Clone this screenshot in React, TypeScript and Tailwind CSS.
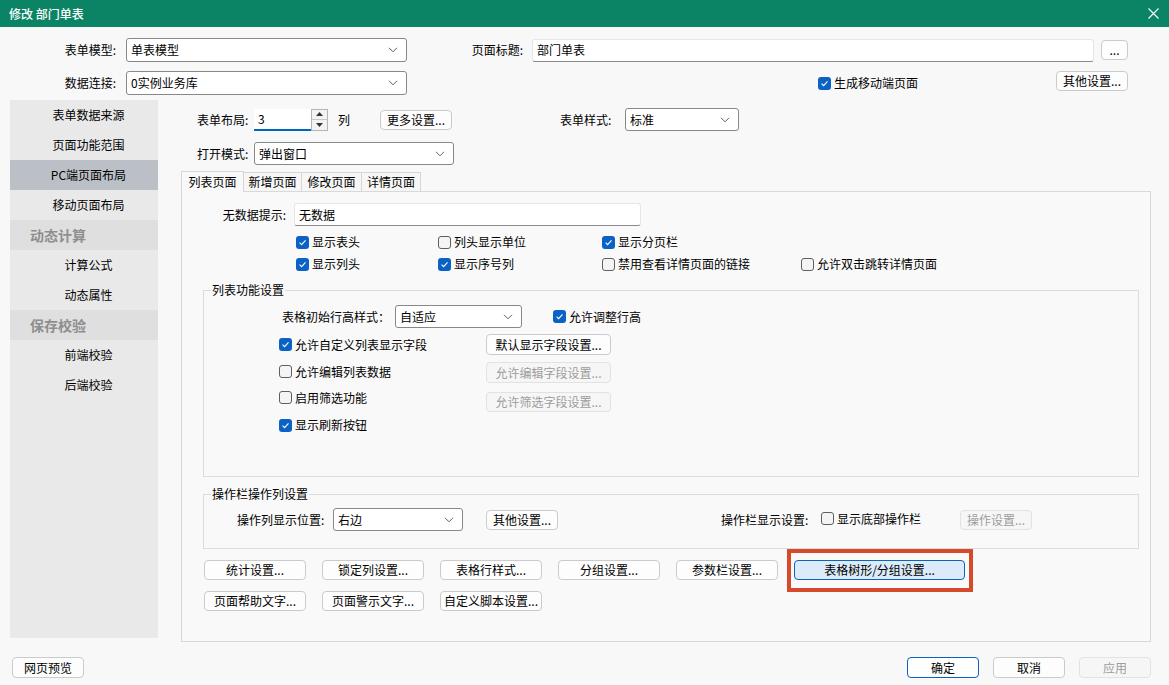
import React from 'react';

const Chevron: React.FC = () => (
  <svg width="10" height="6" viewBox="0 0 10 6" className="shrink-0">
    <path d="M1 0.8 L5 4.8 L9 0.8" fill="none" stroke="#5e5e5e" strokeWidth="1" />
  </svg>
);

const Check: React.FC<{ checked?: boolean; label: string }> = ({ checked, label }) => (
  <span className="inline-flex items-center gap-[3px] whitespace-nowrap">
    {checked ? (
      <span className="w-[13px] h-[13px] rounded-[3px] bg-[#0b62c4] flex items-center justify-center shrink-0">
        <svg width="9" height="9" viewBox="0 0 9 9">
          <path d="M1.6 4.7 L3.6 6.6 L7.5 2.3" fill="none" stroke="#ffffff" strokeWidth="1.1" />
        </svg>
      </span>
    ) : (
      <span className="w-[13px] h-[13px] rounded-[3px] border border-[#5f5f5f] bg-[#f4f4f4] shrink-0" />
    )}
    <span>{label}</span>
  </span>
);

const Btn: React.FC<{ children: React.ReactNode; className?: string; disabled?: boolean }> = ({
  children,
  className = '',
  disabled,
}) => (
  <button
    className={`h-[20px] rounded-[4px] border flex items-center justify-center whitespace-nowrap leading-none shrink-0 ${
      disabled ? 'border-[#e2e2e2] bg-[#f6f6f6] text-[#9d9d9d]' : 'border-[#cbcbcb] bg-[#fdfdfd] text-black'
    } ${className}`}
  >
    {children}
  </button>
);

const Select: React.FC<{ value: string; className?: string }> = ({ value, className = '' }) => (
  <div
    className={`h-[23px] bg-white border border-[#888888] rounded-[3px] flex items-center justify-between pl-[4px] pr-[8px] shrink-0 ${className}`}
  >
    <span>{value}</span>
    <Chevron />
  </div>
);

const TextBox: React.FC<{ value: string; className?: string }> = ({ value, className = '' }) => (
  <div
    className={`h-[23px] bg-white border border-[#e6e6e6] border-b-[#8a8a8a] rounded-[3px] flex items-center pl-[4px] shrink-0 ${className}`}
  >
    {value}
  </div>
);

const sideItems = [
  { label: '表单数据来源' },
  { label: '页面功能范围' },
  { label: 'PC端页面布局', active: true },
  { label: '移动页面布局' },
  { label: '动态计算', header: true },
  { label: '计算公式' },
  { label: '动态属性' },
  { label: '保存校验', header: true },
  { label: '前端校验' },
  { label: '后端校验' },
];

const App: React.FC = () => {
  return (
    <div className="w-[1169px] h-[685px] bg-[#f8f8f8] flex flex-col text-[12px] leading-[16px] text-black font-['Noto_Sans_CJK_SC','Noto_Sans',sans-serif] overflow-hidden">
      {/* Title bar */}
      <div className="h-[27px] bg-[#0b8466] text-white flex items-center justify-between pl-[9px] pr-[10px] shrink-0">
        <span className="text-[12px] font-medium">修改 部门单表</span>
        <svg width="11" height="11" viewBox="0 0 11 11">
          <path d="M0.5 0.5 L10.5 10.5 M10.5 0.5 L0.5 10.5" stroke="#ffffff" strokeWidth="1.1" />
        </svg>
      </div>

      {/* Top rows */}
      <div className="pt-[11px] shrink-0">
        <div className="flex items-center h-[24px]">
          <span className="w-[116px] text-right">表单模型:</span>
          <Select value="单表模型" className="ml-[10px] w-[281px] h-[24px]" />
          <span className="w-[116px] text-right">页面标题:</span>
          <TextBox value="部门单表" className="ml-[9px] w-[562px]" />
          <Btn className="ml-[7px] w-[27px]">...</Btn>
        </div>
        <div className="flex items-center h-[24px] mt-[9px]">
          <span className="w-[116px] text-right">数据连接:</span>
          <Select value="0实例业务库" className="ml-[10px] w-[281px] h-[24px]" />
          <span className="ml-[411px] w-[238px]">
            <Check checked label="生成移动端页面" />
          </span>
          <Btn className="w-[72px] -mt-[4px]">其他设置...</Btn>
        </div>
      </div>

      {/* Middle */}
      <div className="flex mt-[5px] h-[542px] shrink-0">
        {/* Sidebar */}
        <div className="ml-[10px] w-[148px] h-[538px] bg-[#e9e9e9] flex flex-col shrink-0">
          {sideItems.map((it) =>
            it.header ? (
              <div
                key={it.label}
                className="h-[30px] bg-[#dfdfdf] flex items-center pl-[20px] text-[14px] font-bold text-[#8e8e8e]"
              >
                {it.label}
              </div>
            ) : (
              <div
                key={it.label}
                className={`h-[30px] flex items-center justify-center pl-[9px] ${it.active ? 'bg-[#bbc0c7]' : ''}`}
              >
                {it.label}
              </div>
            )
          )}
        </div>

        {/* Main */}
        <div className="ml-[23px] w-[970px] pt-[8px] flex flex-col">
          <div className="flex items-center h-[23px]">
            <span className="ml-[16px] w-[57px]">表单布局:</span>
            <div className="w-[57px] h-[22px] bg-white border-b-2 border-[#0067c0] flex items-center pl-[4px]">3</div>
            <div className="w-[17px] h-[22px] flex flex-col border border-[#b5b5b5] bg-[#f3f3f3]">
              <div className="flex-1 flex items-center justify-center border-b border-[#c8c8c8]">
                <svg width="7" height="4" viewBox="0 0 7 4">
                  <path d="M0 4 L3.5 0 L7 4 Z" fill="#333" />
                </svg>
              </div>
              <div className="flex-1 flex items-center justify-center">
                <svg width="7" height="4" viewBox="0 0 7 4">
                  <path d="M0 0 L3.5 4 L7 0 Z" fill="#333" />
                </svg>
              </div>
            </div>
            <span className="ml-[10px] w-[42px]">列</span>
            <Btn className="w-[72px]">更多设置...</Btn>
            <span className="ml-[108px] w-[65px]">表单样式:</span>
            <Select value="标准" className="w-[114px]" />
          </div>
          <div className="flex items-center h-[23px] mt-[11px]">
            <span className="ml-[16px] w-[57px]">打开模式:</span>
            <Select value="弹出窗口" className="w-[200px]" />
          </div>

          {/* Tabs */}
          <div className="flex items-end h-[20px] mt-[6px]">
            <div className="w-[63px] h-[21px] -mb-px relative z-10 bg-[#f9f9f9] border border-b-0 border-[#d6d6d6] flex items-center justify-center">
              列表页面
            </div>
            {['新增页面', '修改页面', '详情页面'].map((t, i) => (
              <div
                key={t}
                className={`h-[19px] border-t border-r border-[#d6d6d6] bg-[#f6f6f6] flex items-center justify-center ${
                  i === 0 ? 'w-[58px]' : i === 1 ? 'w-[60px]' : 'w-[59px]'
                }`}
              >
                {t}
              </div>
            ))}
          </div>

          {/* Pane */}
          <div className="h-[451px] border border-[#d9d9d9] bg-[#f9f9f9] flex flex-col">
            <div className="flex items-center h-[23px] mt-[11px]">
              <span className="w-[104px] text-right">无数据提示:</span>
              <TextBox value="无数据" className="ml-[8px] w-[347px]" />
            </div>
            <div className="grid grid-cols-[142px_164px_199px_auto] ml-[114px] mt-[7px] gap-y-[4px]">
              <div className="h-[18px] flex items-center"><Check checked label="显示表头" /></div>
              <div className="h-[18px] flex items-center"><Check label="列头显示单位" /></div>
              <div className="h-[18px] flex items-center"><Check checked label="显示分页栏" /></div>
              <div className="h-[18px]" />
              <div className="h-[18px] flex items-center"><Check checked label="显示列头" /></div>
              <div className="h-[18px] flex items-center"><Check checked label="显示序号列" /></div>
              <div className="h-[18px] flex items-center"><Check label="禁用查看详情页面的链接" /></div>
              <div className="h-[18px] flex items-center"><Check label="允许双击跳转详情页面" /></div>
            </div>

            {/* 列表功能设置 */}
            <fieldset className="ml-[21px] mt-[10px] w-[936px] h-[194px] border border-[#dcdcdc]">
              <legend className="ml-[7px] px-[1px] leading-[14px]">列表功能设置</legend>
              <div className="flex items-center h-[23px] mt-[8px]">
                <span className="ml-[78px] w-[113px]">表格初始行高样式：</span>
                <Select value="自适应" className="w-[127px]" />
                <span className="ml-[31px]"><Check checked label="允许调整行高" /></span>
              </div>
              <div className="flex items-center h-[21px] mt-[6px]">
                <span className="ml-[75px] w-[207px]"><Check checked label="允许自定义列表显示字段" /></span>
                <Btn className="w-[125px] h-[21px]">默认显示字段设置...</Btn>
              </div>
              <div className="flex items-center h-[21px] mt-[7px]">
                <span className="ml-[75px] w-[207px]"><Check label="允许编辑列表数据" /></span>
                <Btn disabled className="w-[125px] h-[21px]">允许编辑字段设置...</Btn>
              </div>
              <div className="flex items-start h-[21px] mt-[8px]">
                <span className="ml-[75px] w-[207px] h-[13px] flex items-center"><Check label="启用筛选功能" /></span>
                <Btn disabled className="w-[125px] mt-[1px]">允许筛选字段设置...</Btn>
              </div>
              <div className="flex items-center h-[16px] mt-[5px]">
                <span className="ml-[75px]"><Check checked label="显示刷新按钮" /></span>
              </div>
            </fieldset>

            {/* 操作栏操作列设置 */}
            <fieldset className="ml-[21px] mt-[10px] w-[936px] h-[62px] border border-[#dcdcdc]">
              <legend className="ml-[7px] px-[1px] leading-[14px]">操作栏操作列设置</legend>
              <div className="flex items-center h-[23px] mt-[7px]">
                <span className="ml-[33px] w-[96px]">操作列显示位置:</span>
                <Select value="右边" className="w-[130px]" />
                <Btn className="ml-[23px] w-[72px]">其他设置...</Btn>
                <span className="ml-[163px] w-[100px]">操作栏显示设置:</span>
                <span className="w-[139px]"><Check label="显示底部操作栏" /></span>
                <Btn disabled className="w-[72px]">操作设置...</Btn>
              </div>
            </fieldset>

            {/* Button rows */}
            <div className="flex items-center gap-[16px] ml-[22px] mt-[11px] h-[20px]">
              <Btn className="w-[102px]">统计设置...</Btn>
              <Btn className="w-[102px]">锁定列设置...</Btn>
              <Btn className="w-[102px]">表格行样式...</Btn>
              <Btn className="w-[102px]">分组设置...</Btn>
              <Btn className="w-[102px]">参数栏设置...</Btn>
              <span className="relative">
                <button className="w-[171px] h-[20px] rounded-[4px] border border-[#0a63c0] bg-[#dcebf9] flex items-center justify-center whitespace-nowrap leading-none">
                  表格树形/分组设置...
                </button>
                <span className="absolute -left-[7px] -right-[8px] -top-[11px] -bottom-[12px] border-[4px] border-[#d64a2b] pointer-events-none" />
              </span>
            </div>
            <div className="flex items-center gap-[16px] ml-[22px] mt-[11px] h-[20px]">
              <Btn className="w-[102px]">页面帮助文字...</Btn>
              <Btn className="w-[102px]">页面警示文字...</Btn>
              <Btn className="w-[102px]">自定义脚本设置...</Btn>
            </div>
          </div>
        </div>
      </div>

      {/* Bottom */}
      <div className="flex items-center h-[21px] mt-[15px] shrink-0">
        <Btn className="ml-[12px] w-[72px] h-[21px]">网页预览</Btn>
        <div className="ml-auto flex items-center gap-[14px] mr-[18px]">
          <button className="w-[72px] h-[21px] rounded-[4px] border border-[#0a63c0] bg-white flex items-center justify-center leading-none">
            确定
          </button>
          <Btn className="w-[72px] h-[21px]">取消</Btn>
          <Btn disabled className="w-[72px] h-[21px]">应用</Btn>
        </div>
      </div>
    </div>
  );
};

export default App;
